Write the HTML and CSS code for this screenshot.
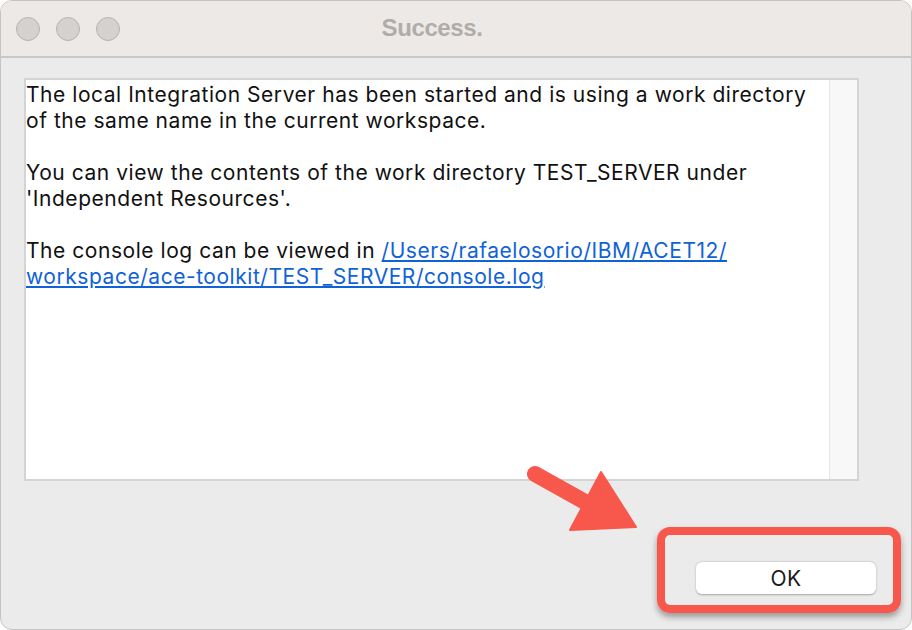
FILE: index.html
```html
<!DOCTYPE html>
<html>
<head>
<meta charset="utf-8">
<link rel="stylesheet" href="styles.css">
</head>
<body>
<div class="window">
  <div class="titlebar">
    <div class="lights">
      <span class="light"></span>
      <span class="light"></span>
      <span class="light"></span>
    </div>
    <div class="title">Success.</div>
  </div>
  <div class="content">
    <div class="textbox">
      <div class="text">
        <p>The local Integration Server has been started and is using a work directory<br>of the same name in the current workspace.</p>
        <p>You can view the contents of the work directory TEST_SERVER under<br>'Independent Resources'.</p>
        <p>The console log can be viewed in <a href="#">/Users/rafaelosorio/IBM/ACET12/<br>workspace/ace-toolkit/TEST_SERVER/console.log</a></p>
      </div>
      <div class="scrollbar"></div>
    </div>
    <div class="footer">
      <div class="highlight">
        <button class="ok">OK</button>
      </div>
    </div>
  </div>
  <svg class="arrow" width="130" height="80" viewBox="0 0 130 80">
    <line x1="12" y1="12" x2="80" y2="50" stroke="#f8584b" stroke-width="16" stroke-linecap="round"/>
    <polygon points="78,10 113,65 47,68" fill="#f8584b" stroke="#f8584b" stroke-width="2" stroke-linejoin="round"/>
  </svg>
</div>
</body>
</html>
```

FILE: styles.css
```css
* { box-sizing: border-box; }
html, body { margin: 0; padding: 0; background: #ffffff; }
body { width: 912px; height: 630px; overflow: hidden; font-family: "Liberation Sans", Arial, sans-serif; }

.window {
  position: relative;
  width: 912px;
  height: 630px;
  border-radius: 12px;
  border: 1px solid #c4c4c4;
  background: #ebebeb;
  overflow: hidden;
  display: flex;
  flex-direction: column;
}

.titlebar {
  height: 57px;
  flex: none;
  background: #ede9e6;
  border-bottom: 2px solid #c8c8c8;
  display: flex;
  align-items: center;
  position: relative;
}

.lights { display: flex; gap: 16px; padding-left: 15px; }
.light {
  width: 24px; height: 24px; border-radius: 50%;
  background: #d5d1cf; border: 1px solid #b7b3b1;
}

.title {
  position: absolute;
  left: 0; right: 0; top: 13px;
  text-align: center;
  font-weight: bold;
  font-size: 24px;
  color: #b0acaa;
  letter-spacing: -0.4px;
  padding-right: 48px;
}

.content { flex: 1; display: flex; flex-direction: column; padding: 20px 52px 0 23px; }

.textbox {
  height: 403px;
  border: 2px solid #d4d4d4;
  background: #ffffff;
  display: flex;
}
.text {
  flex: 1; padding: 2px 0 0 0;
  font-family: Inter, "Liberation Sans", sans-serif;
  font-size: 21px; line-height: 26px; color: #111;
  letter-spacing: 0.54px;
  white-space: nowrap;
}
.text p { margin: 0 0 26px 0; }
.text a { color: #1063d6; text-decoration: underline; }
.scrollbar { width: 28px; background: #f8f8f8; border-left: 1px solid #e6e6e6; }

.footer { display: flex; justify-content: flex-end; padding-top: 46px; margin-right: -42px; }

.highlight {
  width: 244px; height: 86px;
  border: 8px solid #f8584b;
  border-radius: 13px;
  box-shadow: 0 4px 6px rgba(0,0,0,0.35);
  display: flex; align-items: flex-end; justify-content: center;
  padding: 0 16px 11px 30px;
}

.ok {
  width: 180px; height: 32px;
  background: #ffffff;
  border: none;
  border-radius: 6px;
  box-shadow: 0 0.5px 2px rgba(0,0,0,0.3);
  font-family: Inter, "Liberation Sans", Arial, sans-serif;
  font-size: 21px;
  letter-spacing: 0.5px;
  color: #1a1a1a;
}

.arrow { position: absolute; left: 522px; top: 461px; }
```
